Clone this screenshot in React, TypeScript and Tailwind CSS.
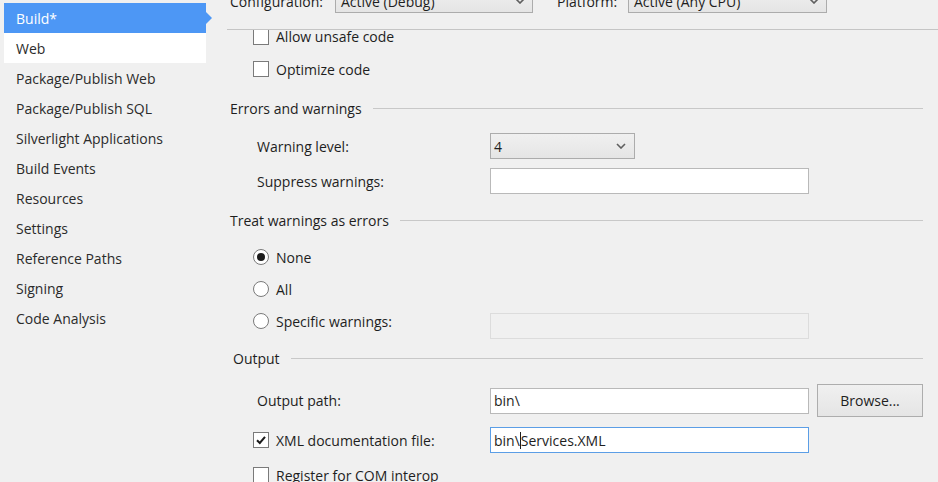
import React from "react";

const font = "font-['Segoe_UI','Open_Sans',sans-serif]";

function Chevron() {
  return (
    <svg width="10" height="6" viewBox="0 0 10 6" className="shrink-0">
      <path d="M1 1 L5 5 L9 1" fill="none" stroke="#5f5f5f" strokeWidth="1.6" />
    </svg>
  );
}

function Check({ checked }: { checked?: boolean }) {
  return (
    <div className="w-[16px] h-[16px] shrink-0 border border-[#7a7a7a] bg-white flex items-center justify-center">
      {checked && (
        <svg width="12" height="12" viewBox="0 0 12 12">
          <path d="M2 6.2 L4.8 9 L10 2.8" fill="none" stroke="#1b1b1b" strokeWidth="2" />
        </svg>
      )}
    </div>
  );
}

function Radio({ checked }: { checked?: boolean }) {
  return (
    <div className="w-[16px] h-[16px] shrink-0 rounded-full border border-[#7a7a7a] bg-white flex items-center justify-center">
      {checked && <div className="w-[8px] h-[8px] rounded-full bg-[#1b1b1b]" />}
    </div>
  );
}

function Select({ value, w }: { value: string; w: string }) {
  return (
    <div
      className={`${w} h-[26px] border border-[#acacac] bg-gradient-to-b from-[#f0f0f0] to-[#e5e5e5] flex items-center justify-between pl-[3px] pr-[8px]`}
    >
      <span>{value}</span>
      <Chevron />
    </div>
  );
}

function SectionHeader({ title, pad, mt }: { title: string; pad: string; mt: string }) {
  return (
    <div className={`h-[24px] ${mt} flex items-center gap-[11px] ${pad} pr-[15px]`}>
      <span className="whitespace-nowrap">{title}</span>
      <div className="flex-1 h-px bg-[#c8c8c8]" />
    </div>
  );
}

const navItems = [
  "Package/Publish Web",
  "Package/Publish SQL",
  "Silverlight Applications",
  "Build Events",
  "Resources",
  "Settings",
  "Reference Paths",
  "Signing",
  "Code Analysis",
];

export default function App() {
  return (
    <div
      className={`w-[938px] h-[482px] overflow-hidden bg-[#f0f0f0] flex ${font} text-[14px] text-[#1e1e1e]`}
    >
      <nav className="w-[227px] shrink-0 pt-[3px] pl-[4px]">
        <div className="relative w-[202px] h-[30px] bg-[#4d97f5] text-white flex items-center pl-[12px]">
          Build*
          <div className="absolute right-[-6px] top-[9px] w-0 h-0 border-y-[6px] border-l-[6px] border-y-transparent border-l-[#4d97f5]" />
        </div>
        <div className="w-[202px] h-[30px] bg-white flex items-center pl-[12px] text-[#2b2b2b]">Web</div>
        {navItems.map((t) => (
          <div key={t} className="w-[202px] h-[30px] flex items-center pl-[12px] text-[#2b2b2b]">
            {t}
          </div>
        ))}
      </nav>

      <main className="flex-1 flex flex-col min-w-0">
        <header className="-mt-[11px] h-[41px] shrink-0 border-b border-[#c5c5c5] flex items-start pl-[3px]">
          <div className="h-[24px] flex items-center w-[105px]">Configuration:</div>
          <div className="w-[198px] h-[24px] border border-[#acacac] bg-gradient-to-b from-[#f0f0f0] to-[#e5e5e5] flex items-center justify-between pl-[5px] pr-[7px]">
            <span>Active (Debug)</span>
            <Chevron />
          </div>
          <div className="h-[24px] flex items-center ml-[24px] w-[71px]">Platform:</div>
          <div className="w-[199px] h-[24px] border border-[#acacac] bg-gradient-to-b from-[#f0f0f0] to-[#e5e5e5] flex items-center justify-between pl-[5px] pr-[7px]">
            <span>Active (Any CPU)</span>
            <Chevron />
          </div>
        </header>

        <div className="flex-1 overflow-hidden">
          <div className="-mt-[10px]">
            <div className="h-[33px] flex items-center gap-[7px] pl-[26px]">
              <Check />
              <span>Allow unsafe code</span>
            </div>
            <div className="h-[32px] flex items-center gap-[7px] pl-[26px]">
              <Check />
              <span>Optimize code</span>
            </div>

            <SectionHeader title="Errors and warnings" pad="pl-[3px]" mt="mt-[11px]" />

            <div className="mt-[13px] h-[26px] flex items-center pl-[30px]">
              <span className="w-[233px]">Warning level:</span>
              <Select value="4" w="w-[145px]" />
            </div>
            <div className="mt-[9px] h-[26px] flex items-center pl-[30px]">
              <span className="w-[233px]">Suppress warnings:</span>
              <div className="w-[319px] h-[26px] border border-[#b9b9b9] bg-white" />
            </div>

            <SectionHeader title="Treat warnings as errors" pad="pl-[3px]" mt="mt-[14px]" />

            <div className="mt-[9px] h-[32px] flex items-center gap-[7px] pl-[26px]">
              <Radio checked />
              <span>None</span>
            </div>
            <div className="h-[32px] flex items-center gap-[7px] pl-[26px]">
              <Radio />
              <span>All</span>
            </div>
            <div className="flex items-start pl-[26px]">
              <div className="w-[237px] h-[32px] flex items-center gap-[7px]">
                <Radio />
                <span>Specific warnings:</span>
              </div>
              <div className="mt-[8px] w-[319px] h-[26px] border border-[#dcdcdc] bg-[#f0f0f0]" />
            </div>

            <SectionHeader title="Output" pad="pl-[6px]" mt="mt-[7px]" />

            <div className="mt-[14px] h-[33px] flex items-center pl-[30px]">
              <span className="w-[233px]">Output path:</span>
              <div className="w-[319px] h-[26px] border border-[#b9b9b9] bg-white flex items-center pl-[3px]">
                bin\
              </div>
              <div className="ml-[8px] w-[106px] h-[33px] border border-[#adadad] bg-gradient-to-b from-[#f0f0f0] to-[#e5e5e5] flex items-center justify-center">
                Browse...
              </div>
            </div>

            <div className="mt-[10px] h-[26px] flex items-center pl-[26px]">
              <div className="w-[237px] flex items-center gap-[7px]">
                <Check checked />
                <span>XML documentation file:</span>
              </div>
              <div className="w-[319px] h-[26px] border border-[#5b9ee6] bg-white flex items-center pl-[3px]">
                <span>bin\</span>
                <span className="inline-block w-px h-[17px] bg-[#1e1e1e]" />
                <span>Services.XML</span>
              </div>
            </div>

            <div className="mt-[6px] h-[32px] flex items-center gap-[7px] pl-[26px]">
              <Check />
              <span>Register for COM interop</span>
            </div>
          </div>
        </div>
      </main>
    </div>
  );
}
